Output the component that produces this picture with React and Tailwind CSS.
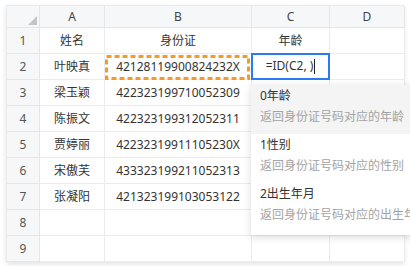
import React from "react";

const cols = ["A", "B", "C", "D"];

const rows = [
  ["姓名", "身份证", "年龄"],
  ["叶映真", "42128119900824232X", ""],
  ["梁玉颖", "422323199710052309", ""],
  ["陈振文", "422323199312052311", ""],
  ["贾婷丽", "42232319911105230X", ""],
  ["宋傲芙", "433323199211052313", ""],
  ["张凝阳", "421323199103053122", ""],
  ["", "", ""],
  ["", "", ""],
];

const options = [
  { label: "0年龄", desc: "返回身份证号码对应的年龄" },
  { label: "1性别", desc: "返回身份证号码对应的性别" },
  { label: "2出生年月", desc: "返回身份证号码对应的出生年月" },
];

const font = { fontFamily: '"Noto Sans", "Noto Sans CJK SC", sans-serif' };

function DashedSelection() {
  return (
    <svg className="absolute left-0 top-[1px] pointer-events-none" width="145" height="25">
      <rect x="1.5" y="1.5" width="142" height="22" fill="none" stroke="#f59b25" strokeWidth="3" strokeDasharray="5 3" />
    </svg>
  );
}

export default function App() {
  return (
    <div className="relative w-[410px] h-[266px] overflow-hidden bg-white pl-[6px] pt-[5px] text-[12px] text-[#333]" style={font}>
      {/* sheet */}
      <div className="grid grid-cols-[33px_65px_147px_78px_75px] grid-rows-[22px_repeat(9,26px)] w-[398px] border-t border-l border-[#ebebeb] shadow-[0_2px_5px_rgba(0,0,0,0.12)]">
        {/* corner */}
        <div className="relative bg-[#f6f7f8] border-r border-b border-[#e6e6e6]">
          <div className="absolute right-[2px] bottom-[2px] w-0 h-0 border-l-[9px] border-l-transparent border-b-[9px] border-b-[#c4c4c4]" />
        </div>
        {cols.map((c) => (
          <div key={c} className="flex items-center justify-center bg-[#f6f7f8] border-r border-b border-[#e6e6e6] text-[#444]">
            {c}
          </div>
        ))}

        {rows.map((r, i) => (
          <React.Fragment key={i}>
            <div className="flex items-center justify-center bg-[#f6f7f8] border-r border-b border-[#e6e6e6] text-[#555]">
              {i + 1}
            </div>
            <div className="flex items-end justify-center pb-[3px] leading-[18px] border-r border-b border-[#ececec]">
              {r[0]}
            </div>
            <div className="relative flex items-end justify-center pb-[3px] leading-[18px] border-r border-b border-[#ececec]">
              {r[1]}
              {i === 1 && <DashedSelection />}
            </div>
            {i === 1 ? (
              <div className="relative z-10 flex items-end justify-center pb-[3px] leading-[18px] -ml-px -mt-px border-2 border-[#2b7af5] bg-white">
                <span>=ID(C2, )</span>
                <span className="ml-[1px] mb-[1px] w-px h-[15px] bg-[#222]" />
              </div>
            ) : (
              <div className="flex items-end justify-center pb-[3px] leading-[18px] border-r border-b border-[#ececec]">
                {r[2]}
              </div>
            )}
            <div className="border-r border-b border-[#ececec]" />
          </React.Fragment>
        ))}
      </div>

      {/* function argument dropdown */}
      <div className="absolute left-[251px] top-[85px] w-[180px] bg-white shadow-[0_2px_8px_rgba(0,0,0,0.15)] pb-[3px]">
        {options.map((o, i) => (
          <div key={o.label} className={`h-[49px] pl-[9px] pt-[2px] ${i === 0 ? "bg-[#f4f4f4]" : ""}`}>
            <div className="leading-[18px] text-[#333]">{o.label}</div>
            <div className="mt-[3px] leading-[18px] text-[#a3a3a3] whitespace-nowrap">{o.desc}</div>
          </div>
        ))}
      </div>
    </div>
  );
}
